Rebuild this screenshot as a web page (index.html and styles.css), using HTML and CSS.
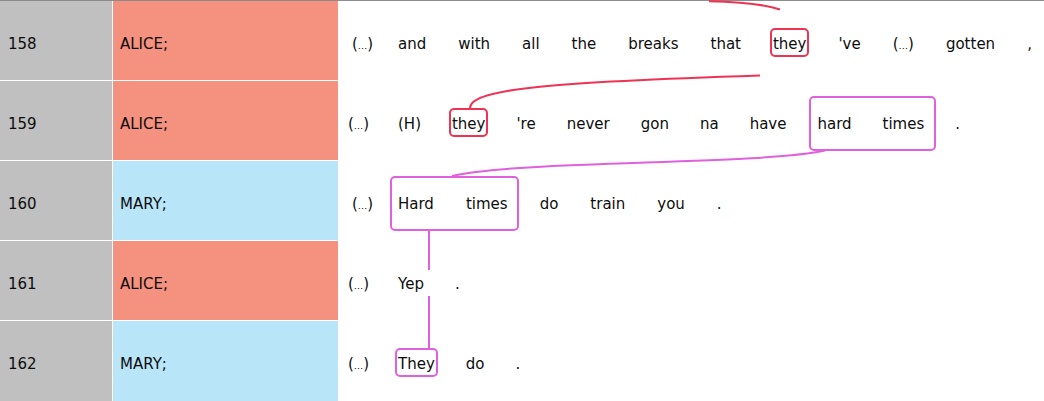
FILE: index.html
```html
<!DOCTYPE html>
<html lang="en">
<head>
<meta charset="utf-8">
<title>Transcript coreference</title>
<link rel="stylesheet" href="styles.css">
</head>
<body>
<div class="sheet">
  <div class="row">
    <div class="num">158</div>
    <div class="spk alice">ALICE;</div>
    <div class="line loose">
      <span class="tok lead shift">(<span class="ell">…</span>)</span>
      <span class="tok">and</span>
      <span class="tok">with</span>
      <span class="tok">all</span>
      <span class="tok">the</span>
      <span class="tok">breaks</span>
      <span class="tok">that</span>
      <span class="tok ment red">they</span>
      <span class="tok">'ve</span>
      <span class="tok">(<span class="ell">…</span>)</span>
      <span class="tok">gotten</span>
      <span class="tok">,</span>
    </div>
  </div>
  <div class="row">
    <div class="num">159</div>
    <div class="spk alice">ALICE;</div>
    <div class="line">
      <span class="tok lead">(<span class="ell">…</span>)</span>
      <span class="tok">(H)</span>
      <span class="tok ment red">they</span>
      <span class="tok">'re</span>
      <span class="tok">never</span>
      <span class="tok">gon</span>
      <span class="tok">na</span>
      <span class="tok">have</span>
      <span class="grp mag"><span class="tok">hard</span><span class="tok">times</span></span>
      <span class="tok">.</span>
    </div>
  </div>
  <div class="row">
    <div class="num">160</div>
    <div class="spk mary">MARY;</div>
    <div class="line loose">
      <span class="tok lead shift">(<span class="ell">…</span>)</span>
      <span class="grp mag"><span class="tok">Hard</span><span class="tok">times</span></span>
      <span class="tok">do</span>
      <span class="tok">train</span>
      <span class="tok">you</span>
      <span class="tok">.</span>
    </div>
  </div>
  <div class="row">
    <div class="num">161</div>
    <div class="spk alice">ALICE;</div>
    <div class="line">
      <span class="tok lead">(<span class="ell">…</span>)</span>
      <span class="tok">Yep</span>
      <span class="tok">.</span>
    </div>
  </div>
  <div class="row">
    <div class="num">162</div>
    <div class="spk mary">MARY;</div>
    <div class="line">
      <span class="tok lead">(<span class="ell">…</span>)</span>
      <span class="tok ment mag">They</span>
      <span class="tok">do</span>
      <span class="tok">.</span>
    </div>
  </div>
  <svg class="links" width="1044" height="401" viewBox="0 0 1044 401" aria-hidden="true">
    <g fill="none" stroke-width="2">
      <path class="l-red" d="M709 1.3 C735 1.8 765 4.5 780 9.5"/>
      <path class="l-red" d="M470 108 C470 88 560 82 760 75.5"/>
      <path class="l-mag" d="M825 150.5 C760 165 520 160 452 176"/>
      <path class="l-mag" d="M429 231 V270 M429 296 V349"/>
    </g>
  </svg>
</div>
</body>
</html>
```

FILE: styles.css
```css
html, body {
  margin: 0;
  padding: 0;
  background: #ffffff;
}

body {
  font-family: "DejaVu Sans", "Liberation Sans", sans-serif;
  font-size: 15px;
  color: #0d0d0d;
  width: 1044px;
  height: 401px;
  overflow: hidden;
}

.sheet {
  position: relative;
  display: flex;
  flex-direction: column;
  gap: 1px;
  border-top: 1px solid #8c8c8c;
  background: #ffffff;
}

.row {
  display: grid;
  grid-template-columns: 112px 225px 1fr;
  column-gap: 1px;
  height: 79px;
}

.row:last-of-type {
  height: 80px;
}

.num,
.spk,
.line {
  box-sizing: border-box;
  padding-top: 34px;
  white-space: nowrap;
}

.num {
  background: #c0c0c0;
  padding-left: 8px;
}

.spk {
  padding-left: 7px;
}

.alice {
  background: #f5917f;
}

.mary {
  background: #b8e6f8;
}

.line {
  display: flex;
  align-items: flex-start;
  padding-left: 9px;
}

.tok {
  position: relative;
  flex: none;
  margin-right: 31px;
}

.loose .tok,
.loose .grp {
  margin-right: 32px;
}

.ell {
  font-size: 9.5px;
}

.line .lead {
  box-sizing: border-box;
  width: 50px;
  margin-right: 0;
}

.shift {
  padding-left: 4px;
}

.grp {
  position: relative;
  display: flex;
  flex: none;
  margin-right: 31px;
}

.line .grp > .tok:last-child {
  margin-right: 0;
}

.ment::before,
.grp::before {
  content: "";
  position: absolute;
  border: 2px solid transparent;
  border-radius: 5px;
}

.ment::before {
  inset: -7px -3px -4px -3px;
}

.grp::before {
  inset: -19px -11.5px -17.5px -8.5px;
}

.red::before {
  border-color: #ee3355;
}

.mag::before {
  border-color: #e060de;
}

.links {
  position: absolute;
  top: -1px;
  left: 0;
  pointer-events: none;
}

.l-red {
  stroke: #ee3355;
}

.l-mag {
  stroke: #e060de;
}
```
